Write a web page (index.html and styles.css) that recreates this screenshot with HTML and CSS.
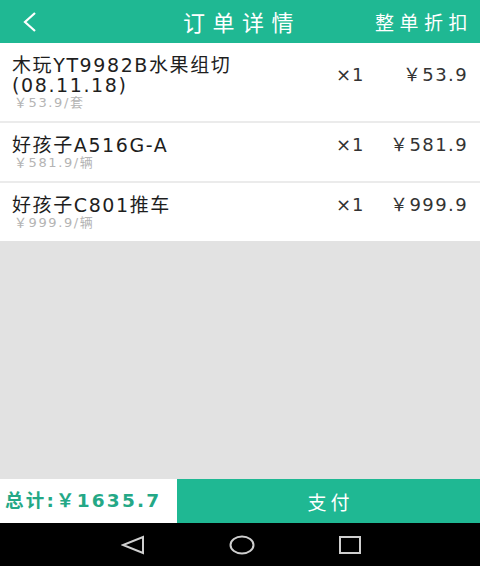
FILE: index.html
```html
<!DOCTYPE html>
<html lang="zh-CN">
<head>
    <meta charset="UTF-8">
    <meta name="viewport" content="width=device-width, initial-scale=1.0">
    <title>订单详情</title>
    <link rel="stylesheet" href="styles.css">
</head>
<body>

    <header class="top-bar">
        <svg class="back" width="20" height="22" viewBox="0 0 20 22">
            <polyline points="15,2 5,11 15,20" fill="none" stroke="#fff" stroke-width="2.2"/>
        </svg>
        <div class="title">订单详情</div>
        <div class="discount">整单折扣</div>
    </header>

    <section class="order-list">
        <div class="order-row">
            <div class="info">
                <div class="name two-line">木玩YT9982B水果组切<br>(08.11.18)</div>
                <div class="unit">￥53.9/套</div>
            </div>
            <div class="qty">×1</div>
            <div class="price">￥53.9</div>
        </div>
        <div class="order-row">
            <div class="info">
                <div class="name">好孩子A516G-A</div>
                <div class="unit">￥581.9/辆</div>
            </div>
            <div class="qty">×1</div>
            <div class="price">￥581.9</div>
        </div>
        <div class="order-row">
            <div class="info">
                <div class="name">好孩子C801推车</div>
                <div class="unit">￥999.9/辆</div>
            </div>
            <div class="qty">×1</div>
            <div class="price">￥999.9</div>
        </div>
    </section>

    <div class="blank"></div>

    <footer class="pay-bar">
        <div class="total">总计:￥1635.7</div>
        <button class="pay-button">支付</button>
    </footer>

    <!-- android nav -->
    <nav class="sys-nav">
        <svg width="24" height="20" viewBox="0 0 24 20"><polygon points="22,2 22,18 2,10" fill="none" stroke="#cfcfcf" stroke-width="2"/></svg>
        <svg width="26" height="20" viewBox="0 0 26 20"><ellipse cx="13" cy="10" rx="11.5" ry="8.5" fill="none" stroke="#cfcfcf" stroke-width="2"/></svg>
        <svg width="24" height="20" viewBox="0 0 24 20"><rect x="2" y="2" width="20" height="16" fill="none" stroke="#cfcfcf" stroke-width="2"/></svg>
    </nav>

</body>
</html>
```

FILE: styles.css
```css
* { box-sizing: border-box; }
body { margin: 0; width: 480px; height: 566px; display: flex; flex-direction: column; background-color: #e2e2e2; font-family: "DejaVu Sans", "Noto Sans CJK SC", sans-serif; color: #222; overflow: hidden; }

.top-bar { height: 43px; flex: none; background-color: #1fb893; color: #fff; display: flex; align-items: center; position: relative; padding: 0 12px 0 20px; }
.back { display: block; }
.title { position: absolute; left: 183px; top: 0; line-height: 43px; font-size: 22px; letter-spacing: 7.5px; font-family: "Noto Sans CJK SC", sans-serif; }
.discount { margin-left: auto; font-size: 19px; letter-spacing: 5.5px; margin-right: -5px; font-family: "Noto Sans CJK SC", sans-serif; }

.order-list { background-color: #fff; flex: none; }
.order-row { display: flex; align-items: center; padding: 12px 13px 10px 12px; border-bottom: 2px solid #ebebeb; }
.order-row:last-child { border-bottom: none; }
.info { flex: 1; }
.name { height: 20px; font-size: 19px; line-height: 20px; letter-spacing: 1.6px; color: #1e1e1e; }
.name.two-line { height: 40px; }
.unit { height: 16px; font-size: 13px; line-height: 16px; letter-spacing: 1.6px; color: #b4b4b4; padding-left: 2px; }
.qty { width: 42px; font-size: 18px; line-height: 20px; letter-spacing: 1px; margin-bottom: 16px; color: #333; }
.price { width: 90px; text-align: right; font-size: 18px; line-height: 20px; letter-spacing: 1.4px; margin-right: -1px; margin-bottom: 16px; color: #333; }

.blank { flex: 1; background-color: #e2e2e2; }

.pay-bar { height: 44px; flex: none; display: flex; background-color: #fff; }
.total { width: 177px; padding-left: 5px; line-height: 44px; font-size: 18.5px; font-weight: bold; letter-spacing: 2.2px; color: #24a886; }
.pay-button { flex: 1; border: none; margin: 0; background-color: #1fb893; color: #fff; font-size: 19px; letter-spacing: 4px; font-family: "Noto Sans CJK SC", sans-serif; padding: 0 0 0 4px; }

.sys-nav { height: 43px; flex: none; background-color: #000; display: flex; align-items: center; }
.sys-nav svg:nth-child(1) { margin-left: 121px; }
.sys-nav svg:nth-child(2) { margin-left: 84px; }
.sys-nav svg:nth-child(3) { margin-left: 83px; }
```
